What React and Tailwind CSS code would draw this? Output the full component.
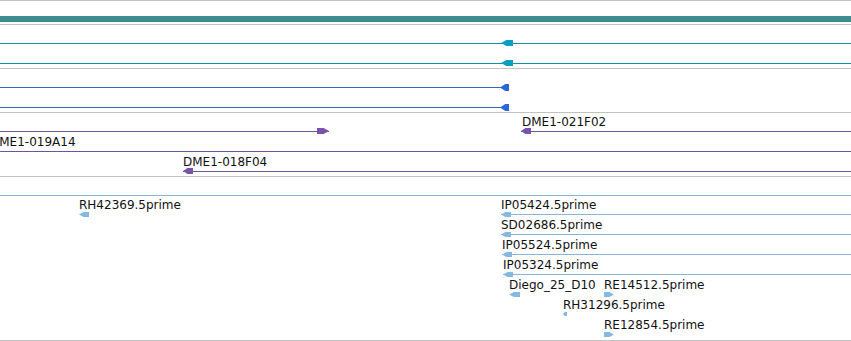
import React from "react";

function Arrow({ x, y, w, h, dir, color, taper = 0.45 }) {
  const pts =
    dir === "left"
      ? `0,${h / 2} ${w * taper},0 ${w},0 ${w},${h} ${w * taper},${h}`
      : `0,0 ${w * (1 - taper)},0 ${w},${h / 2} ${w * (1 - taper)},${h} 0,${h}`;
  return (
    <svg
      className="absolute"
      style={{ left: x, top: y - Math.floor(h / 2), width: w, height: h }}
      viewBox={`0 0 ${w} ${h}`}
    >
      <polygon points={pts} fill={color} />
    </svg>
  );
}

function Feature({ f, color, arrowColor }) {
  const { x1, x2 = x1, y, dir, ax, aw = 10, ah = 6, taper, label, lx, line = true } = f;
  return (
    <>
      {line && (
        <div
          className="absolute h-px"
          style={{ left: x1, width: x2 - x1, top: y, background: color }}
        />
      )}
      {dir && (
        <Arrow
          x={ax ?? (dir === "left" ? x1 : x2 - aw)}
          y={y}
          w={aw}
          h={ah}
          dir={dir}
          taper={taper}
          color={arrowColor}
        />
      )}
      {label && (
        <span
          className="absolute whitespace-nowrap text-[12px] leading-[12px] text-[#111]"
          style={{ left: lx ?? x1, top: y - 15 }}
        >
          {label}
        </span>
      )}
    </>
  );
}

function Track({ h, children }) {
  return (
    <div className="relative shrink-0 border-t border-[#c2c2c2]" style={{ height: h }}>
      {children}
    </div>
  );
}

const tealFeats = [
  { x1: 0, x2: 851, y: 18, dir: "left", ax: 501, aw: 12, ah: 6 },
  { x1: 0, x2: 851, y: 38, dir: "left", ax: 501, aw: 12, ah: 6 },
];
const blueFeats = [
  { x1: 0, x2: 509, y: 18, dir: "left", ax: 500, aw: 9, ah: 7, taper: 0.6 },
  { x1: 0, x2: 509, y: 38, dir: "left", ax: 500, aw: 9, ah: 7, taper: 0.6 },
];
const purpleFeats = [
  { x1: 0, x2: 329, y: 18, dir: "right", aw: 12, ah: 6 },
  { x1: 521, x2: 851, y: 18, dir: "left", aw: 10, ah: 6, label: "DME1-021F02", lx: 522 },
  { x1: 0, x2: 851, y: 38, label: "DME1-019A14", lx: -10 },
  { x1: 183, x2: 851, y: 58, dir: "left", aw: 10, ah: 6, label: "DME1-018F04" },
];
const lightFeats = [
  { x1: 0, x2: 851, y: 18 },
  { x1: 79, x2: 89, y: 37, dir: "left", aw: 10, ah: 5, line: false, label: "RH42369.5prime" },
  { x1: 501, x2: 851, y: 37, dir: "left", aw: 10, ah: 5, label: "IP05424.5prime" },
  { x1: 501, x2: 851, y: 57, dir: "left", aw: 10, ah: 5, label: "SD02686.5prime" },
  { x1: 502, x2: 851, y: 77, dir: "left", aw: 10, ah: 5, label: "IP05524.5prime" },
  { x1: 503, x2: 851, y: 97, dir: "left", aw: 10, ah: 5, label: "IP05324.5prime" },
  { x1: 509, x2: 520, y: 117, dir: "left", aw: 11, ah: 5, line: false, label: "Diego_25_D10" },
  { x1: 604, x2: 614, y: 117, dir: "right", aw: 10, ah: 5, line: false, label: "RE14512.5prime" },
  { x1: 563, x2: 567, y: 137, dir: "left", aw: 4, ah: 4, line: false, label: "RH31296.5prime" },
  { x1: 604, x2: 614, y: 157, dir: "right", aw: 10, ah: 5, line: false, label: "RE12854.5prime" },
];

export default function App() {
  return (
    <div className="flex flex-col w-[851px] h-[341px] bg-white overflow-hidden font-['DejaVu_Sans',sans-serif]">
      <Track h={24}>
        <div className="absolute left-0 right-0 top-[15px] h-[6px] bg-[#3f8e8f]" />
      </Track>
      <Track h={44}>
        {tealFeats.map((f, i) => (
          <Feature key={i} f={f} color="#1b8fa9" arrowColor="#05a0c2" />
        ))}
      </Track>
      <Track h={44}>
        {blueFeats.map((f, i) => (
          <Feature key={i} f={f} color="#3b66b6" arrowColor="#2a68d6" />
        ))}
      </Track>
      <Track h={64}>
        {purpleFeats.map((f, i) => (
          <Feature key={i} f={f} color="#6d53a2" arrowColor="#7853ab" />
        ))}
      </Track>
      <Track h={164}>
        {lightFeats.map((f, i) => (
          <Feature key={i} f={f} color="#8ab5d9" arrowColor="#85b9e0" />
        ))}
      </Track>
      <div className="shrink-0 border-t border-[#c2c2c2]" />
    </div>
  );
}
